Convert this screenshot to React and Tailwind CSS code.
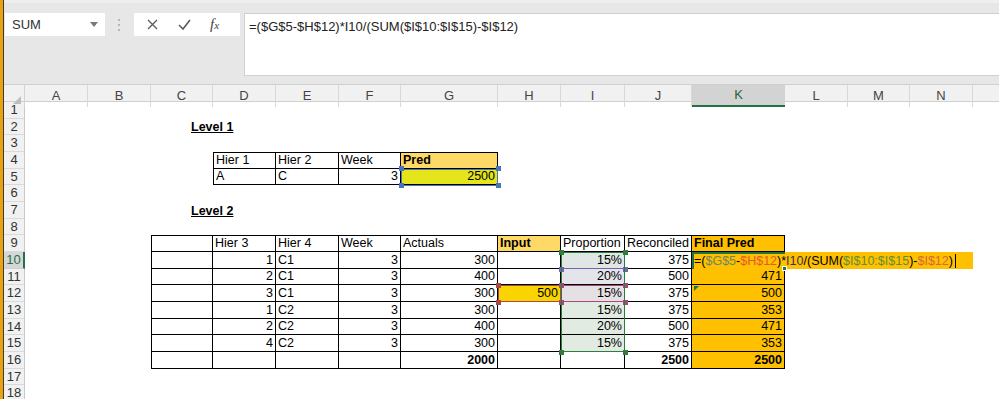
import React from "react";

// column letters and widths, measured off the sheet
const COLS = ["A", "B", "C", "D", "E", "F", "G", "H", "I", "J", "K", "L", "M", "N", "O"];
const ROWS = Array.from({ length: 18 }, (_, i) => i + 1);

// bordered blocks on the sheet
const TABLES = [
  { c0: 3, c1: 6, r0: 4, r1: 5 },
  { c0: 2, c1: 10, r0: 9, r1: 16 },
];

const cells = {
  C2: { t: "Level 1", title: true },
  D4: { t: "Hier 1" },
  E4: { t: "Hier 2" },
  F4: { t: "Week" },
  G4: { t: "Pred", bold: true, bg: "bg-[#ffd966]" },
  D5: { t: "A" },
  E5: { t: "C" },
  F5: { t: "3", r: true },
  G5: { t: "2500", r: true, bg: "bg-[#e4e51a]" },
  C7: { t: "Level 2", title: true },
  D9: { t: "Hier 3" },
  E9: { t: "Hier 4" },
  F9: { t: "Week" },
  G9: { t: "Actuals" },
  H9: { t: "Input", bold: true, bg: "bg-[#ffd966]" },
  I9: { t: "Proportion" },
  J9: { t: "Reconciled" },
  K9: { t: "Final Pred", bold: true, bg: "bg-[#ffc000]" },
  H12: { t: "500", r: true, bg: "bg-[#f9d400]" },
  G16: { t: "2000", r: true, bold: true },
  J16: { t: "2500", r: true, bold: true },
  K16: { t: "2500", r: true, bold: true, bg: "bg-[#ffc000]" },
};

const body = [
  [10, "1", "C1", "3", "300", "15%", "375", "", "bg-[#dfe6e4]"],
  [11, "2", "C1", "3", "400", "20%", "500", "471", "bg-[#e3e5ea]"],
  [12, "3", "C1", "3", "300", "15%", "375", "500", "bg-[#e4e0e3]"],
  [13, "1", "C2", "3", "300", "15%", "375", "353", "bg-[#e2ebe2]"],
  [14, "2", "C2", "3", "400", "20%", "500", "471", "bg-[#e2ebe2]"],
  [15, "4", "C2", "3", "300", "15%", "375", "353", "bg-[#e2ebe2]"],
];
body.forEach(([r, d, e, f, g, i, j, k, tint]) => {
  cells["D" + r] = { t: d, r: true };
  cells["E" + r] = { t: e };
  cells["F" + r] = { t: f, r: true };
  cells["G" + r] = { t: g, r: true };
  cells["I" + r] = { t: i, r: true, bg: tint };
  cells["J" + r] = { t: j, r: true };
  cells["K" + r] = { t: k, r: true, bg: "bg-[#ffc000]" };
});

function borderFor(ci, r) {
  for (const tb of TABLES) {
    if (ci >= tb.c0 && ci <= tb.c1 && r >= tb.r0 && r <= tb.r1) {
      let cls = " border-r border-b border-black";
      if (ci === tb.c0) cls += " border-l";
      if (r === tb.r0) cls += " border-t";
      return cls;
    }
  }
  return "";
}

function Cell({ ci, r }) {
  const key = COLS[ci] + r;
  const c = cells[key];
  let cls = "relative flex items-end pb-[1px] px-[2px] text-[12.5px] leading-[14px] whitespace-nowrap text-black";
  cls += borderFor(ci, r);
  if (c?.r) cls += " justify-end";
  if (c?.bg) cls += " " + c.bg;
  if (c?.bold) cls += " font-bold";
  if (c?.title) {
    return (
      <div className={cls}>
        <span className="pl-[38px] font-bold underline text-[12.5px]">{c.t}</span>
      </div>
    );
  }
  return <div className={cls}>{c?.t}</div>;
}

function Handles({ bg }) {
  return (
    <>
      <span className={"absolute -left-[3.5px] -top-[3.5px] w-[5px] h-[5px] " + bg} />
      <span className={"absolute -right-[3.5px] -top-[3.5px] w-[5px] h-[5px] " + bg} />
      <span className={"absolute -left-[3.5px] -bottom-[3.5px] w-[5px] h-[5px] " + bg} />
      <span className={"absolute -right-[3.5px] -bottom-[3.5px] w-[5px] h-[5px] " + bg} />
    </>
  );
}

export default function App() {
  return (
    <div className="relative w-[999px] h-[399px] overflow-hidden flex bg-white font-['Liberation_Sans',Arial,sans-serif]">
      {/* window edge */}
      <div className="w-[3px] bg-[#eaa20e]" />
      <div className="w-[1px] bg-[#3b3b3b]" />

      <div className="flex-1 flex flex-col overflow-hidden">
        {/* formula bar area */}
        <div className="shrink-0 h-[84px] bg-[#e7e7e7] border-t-[3px] border-t-[#efefef] flex items-start pt-[10px]">
          <div className="ml-[1px] w-[100px] h-[23px] bg-white flex items-center justify-between pl-[7px] pr-[7px] text-[13px] text-[#333]">
            <span>SUM</span>
            <svg width="8" height="5" viewBox="0 0 8 5">
              <path d="M0 0h8L4 5z" fill="#7a7a7a" />
            </svg>
          </div>
          <div className="ml-[13px] mt-[6px] flex flex-col gap-[3px]">
            <span className="w-[2px] h-[2px] bg-[#b5b5b5]" />
            <span className="w-[2px] h-[2px] bg-[#b5b5b5]" />
            <span className="w-[2px] h-[2px] bg-[#b5b5b5]" />
          </div>
          <div className="ml-[14px] w-[106px] h-[23px] bg-white flex items-center text-[#555]">
            <svg className="ml-[13px]" width="11" height="11" viewBox="0 0 11 11">
              <path d="M1 1l9 9M10 1l-9 9" stroke="#5a5a5a" strokeWidth="1.3" />
            </svg>
            <svg className="ml-[20px]" width="13" height="11" viewBox="0 0 13 11">
              <path d="M1 6l4 4 7-9" stroke="#5a5a5a" strokeWidth="1.6" fill="none" />
            </svg>
            <span className="ml-[19px] font-['Liberation_Serif',serif] italic text-[15px] text-[#444]">
              f<span className="text-[11px]">x</span>
            </span>
          </div>
          <div className="ml-[4px] flex-1 h-[63px] bg-white border border-[#d0d0d0] border-r-0 pl-[4px] pt-[3px] text-[13px] text-[#222]">
            =($G$5-$H$12)*I10/(SUM($I$10:$I$15)-$I$12)
          </div>
        </div>

        {/* column headers */}
        <div className="shrink-0 h-[18px] grid grid-cols-[21px_63px_63px_62px_63px_63px_62px_97px_63px_64px_67px_93px_63px_62px_63px_63px] bg-[#f1f1f1] border-t border-b border-[#d0d0d0] text-[13px] text-[#444]">
          <div className="relative border-r border-[#d4d4d4]">
            <svg className="absolute right-[3px] bottom-[3px]" width="8" height="8" viewBox="0 0 8 8">
              <path d="M8 0v8H0z" fill="#bdbdbd" />
            </svg>
          </div>
          {COLS.map((c) =>
            c === "K" ? (
              <div key={c} className="flex items-center justify-center bg-[#d3d3d3] border-b-2 border-[#217346] text-[#2d5f3c]">
                {c}
              </div>
            ) : (
              <div key={c} className="flex items-center justify-center border-r border-[#d8d8d8]">
                {c === "O" ? "" : c}
              </div>
            )
          )}
        </div>

        {/* sheet */}
        <div className="shrink-0 grid grid-cols-[21px_63px_63px_62px_63px_63px_62px_97px_63px_64px_67px_93px_63px_62px_63px_63px] auto-rows-[16.667px]">
          {ROWS.map((r) => (
            <React.Fragment key={r}>
              {r === 10 ? (
                <div className="flex items-center justify-center bg-[#d6d6d6] border-r-2 border-[#217346] border-b border-b-[#d0d0d0] text-[13px] text-[#217346]">
                  {r}
                </div>
              ) : (
                <div className="flex items-center justify-center bg-[#f1f1f1] border-r border-[#c8c8c8] border-b border-b-[#dadada] text-[13px] text-[#333]">
                  {r}
                </div>
              )}
              {COLS.map((c, ci) => (
                <Cell key={c + r} ci={ci} r={r} />
              ))}
            </React.Fragment>
          ))}
        </div>
      </div>

      {/* formula reference highlights */}
      <div className="absolute left-[401px] top-[168.5px] w-[97px] h-[17px] border-[1.5px] border-[#4a74b8]">
        <Handles bg="bg-[#4a74b8]" />
      </div>
      <div className="absolute left-[498px] top-[285px] w-[63px] h-[17px] border-[1.5px] border-[#a84848]">
        <Handles bg="bg-[#a84848]" />
      </div>
      <div className="absolute left-[561px] top-[252px] w-[64px] h-[17px] border-[1.5px] border-[#7565b0]">
        <Handles bg="bg-[#7565b0]" />
      </div>
      <div className="absolute left-[561px] top-[285px] w-[64px] h-[17px] border-[1.5px] border-[#a8467e]">
        <Handles bg="bg-[#a8467e]" />
      </div>
      <div className="absolute left-[561px] top-[252px] w-[64px] h-[100px] border-[1.5px] border-[#2f7d3a]">
        <Handles bg="bg-[#2f7d3a]" />
      </div>

      {/* cell being edited */}
      <div className="absolute left-[692px] top-[252px] w-[281px] h-[17px] bg-[#ffc000] flex items-end pb-[1px] pl-[2px] text-[12.5px] leading-[14px] whitespace-nowrap text-black">
        <span>=(</span>
        <span className="text-[#72845e]">$G$5</span>
        <span>-</span>
        <span className="text-[#e2592c]">$H$12</span>
        <span>)*</span>
        <span className="text-[#3c2f5a]">I10</span>
        <span>/(SUM(</span>
        <span className="text-[#5f8f33]">$I$10:$I$15</span>
        <span>)-</span>
        <span className="text-[#d2683c]">$I$12</span>
        <span>)</span>
        <span className="ml-[2px] w-[1px] h-[14px] bg-black" />
      </div>
      <div className="absolute left-[692px] top-[252px] w-[93px] h-[17px] border-t-2 border-l-2 border-[#217346]" />
      <div className="absolute left-[782px] top-[266px] w-[5px] h-[5px] bg-[#217346] border border-white" />
      <div className="absolute left-[694px] top-[286px] w-0 h-0 border-t-[5px] border-r-[5px] border-t-[#217346] border-r-transparent" />
    </div>
  );
}
